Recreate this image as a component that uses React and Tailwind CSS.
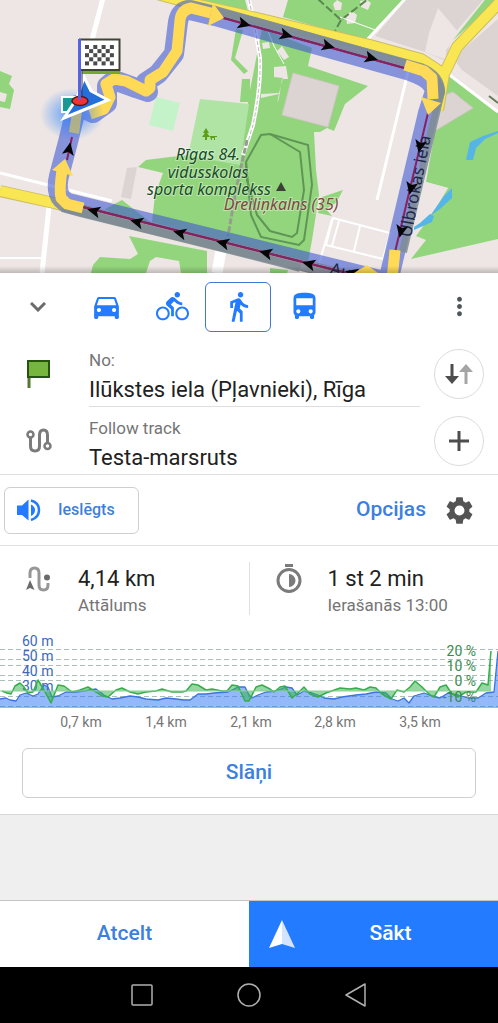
import React, { useState } from 'react';
import {
  MdDirectionsBike,
  MdDirectionsBus,
  MdDirectionsCar,
  MdDirectionsWalk,
  MdMoreVert,
  MdSettings,
} from 'react-icons/md';

const MODES = [
  { id: 'car', label: 'Auto', Icon: MdDirectionsCar },
  { id: 'bike', label: 'Velosipēds', Icon: MdDirectionsBike },
  { id: 'walk', label: 'Kājām', Icon: MdDirectionsWalk },
  { id: 'bus', label: 'Autobuss', Icon: MdDirectionsBus },
];

// x, y, rotation of the direction arrows along the route
const ROUTE_ARROWS = [
  [244, 24, 15], [286, 35, 15], [328, 46, 15], [371, 58, 15],
  [420, 146, 102], [411, 188, 102], [401, 231, 102],
  [352, 273, 194], [309, 264, 194], [266, 253, 194], [223, 243, 194],
  [180, 233, 194], [137, 222, 194], [94, 211, 194], [69, 149, 281],
];

const GRID_LINES = [24, 34, 40, 50, 55, 71, 81];

const ELEVATION =
  '0,74 6,73 10,75 16,76 20,70 26,68 33,71 38,69 44,60 48,62 52,72 58,71 62,69 66,67 76,67 84,66 96,64 104,70 112,74 120,73 130,71 138,72 146,74 158,75 166,73 176,74 184,75 190,75 198,69 206,69 214,68 228,67 238,62 245,62 249,70 252,73 258,70 266,67 276,66 286,62 292,63 297,70 304,66 312,68 318,70 324,73 334,74 342,72 356,70 366,69 376,67 386,68 392,74 398,76 404,73 409,78 414,71 424,68 432,71 440,73 448,68 458,70 468,73 478,73 486,68 494,67 498,26';

const SLOPE =
  '2,66 7,68 11,69 15,61 20,58 24,62 28,68 33,67 38,55 44,65 51,78 58,60 64,61 72,67 80,65 88,62 96,67 102,71 108,72 116,65 122,63 130,67 138,69 146,67 156,66 162,64 172,67 182,67 186,66 192,59 198,60 206,65 212,64 222,66 227,66 232,60 238,61 245,76 249,76 256,62 262,60 270,64 274,67 280,62 285,61 292,73 298,68 304,62 310,69 318,72 326,68 340,63 350,64 356,63 364,65 370,62 376,63 382,69 391,74 397,65 404,67 410,62 415,56 422,62 430,70 434,72 440,62 446,60 452,69 458,72 466,67 476,67 482,58 488,60 491,26';

const RouteMap = () => (
  <svg viewBox="0 0 498 273" className="block w-full h-auto bg-[#ede6e4]" role="img" aria-label="Karte">
    <defs>
      <radialGradient id="heading">
        <stop offset="0.3" stopColor="#237bff" stopOpacity="0.8" />
        <stop offset="1" stopColor="#237bff" stopOpacity="0" />
      </radialGradient>
      <linearGradient id="sheetShadow" x1="0" y1="0" x2="0" y2="1">
        <stop offset="0" stopColor="#000" stopOpacity="0" />
        <stop offset="1" stopColor="#000" stopOpacity="0.2" />
      </linearGradient>
    </defs>

    {/* Buildings and yards */}
    <g fill="#dcd4d2">
      <path d="M406 0H483L452 36L446 61L425 52L375 36Z" />
      <path d="M498 19L458 54L456 62L462 70L498 96Z" />
      <path d="M127 168L137 167L131 199L121 197Z" />
    </g>
    <path d="M438 8L459 33L446 50L447 60L425 52L429 33Z" fill="#ede6e4" />

    {/* Green areas */}
    <g fill="#93d57c">
      <path d="M190 0H245L248 11Z" />
      <path d="M288 0H406L367 41L283 17Z" />
      <path d="M453 40L498 0V-4L488 -4Z" />
      <path d="M262 29L312 48L308 66L368 86L345 104L334 131L327 128L320 132L314 132L316 170L319 195L312 240L308 262L152 222L155 195L163 173L138 167L146 160L170 157L189 155L240 160L249 95Z" />
      <path d="M105 209L122 200L150 222L145 230Z" />
      <path d="M129 236L207 251L207 273H91L93 265L100 257L130 259L138 254Z" />
      <path d="M236 29L243 30L235 58L248 71L244 74L231 60ZM242 79L250 79V102L240 102Z" />
      <path d="M322 197L343 190L336 203L326 209L332 216L318 213Z" />
      <path d="M270 268L288 270L287 273H270Z" />
      <path d="M448 73L498 112V239L411 259L426 240L416 236L433 213L448 188L426 182L436 125Z" />
      <path d="M0 71L12 76L9 84L14 90L10 109L0 107V101L5 102L7 94L0 92Z" />
    </g>
    <path d="M200 99L249 104L240 165L188 156Z" fill="#afe4a5" />
    <path d="M156 97L180 103L173 131L149 125Z" fill="#c4f3ca" />
    <path d="M150 261L156 257L179 261L181 273H146Z" fill="#ede6e4" />
    <path d="M426 182L448 188L430 216L416 228Z" fill="#ede6e4" />
    <g fill="#dcd4d2" stroke="#cfc6c4" strokeWidth="1">
      <path d="M293 73L339 86L328 127L282 115Z" />
      <path d="M453 92L473 108L433 132L442 96Z" />
    </g>
    <g fill="#ede6e4">
      <path d="M262 43L269 42L270 48L263 49ZM277 51L282 46L289 57L284 60ZM274 67L286 66L288 79L282 79L279 98L277 103L279 94L261 98V94L279 93L283 78L274 77Z" />
      <path d="M333 4L337 0L342 3L341 10L335 10ZM346 15L352 11L357 15L355 23L347 24ZM360 1L367 0L371 3L368 10L361 7Z" />
    </g>
    <g fill="none" stroke="#5b8a50" strokeWidth="2" strokeDasharray="8 3">
      <path d="M318 -1L341 20L372 -4M341 20L334 33" />
    </g>
    <g fill="#55b5e6">
      <path d="M466 160L470 142L483 136L498 131V133L485 139L476 148L473 160Z" />
      <path d="M452 188V198L440 209L430 216L444 196ZM430 214L434 216L432 222L414 230V227L420 223Z" />
    </g>

    {/* Stadium track */}
    <g fill="none" stroke="#5f9656" strokeWidth="2">
      <path d="M246 162L261 135L270 134L308 145L312 185L304 240L299 245L261 237L251 215Z" />
      <path d="M270 134L300 152L304 190L297 233L292 237L270 231L257 215L247 180L246 162" />
    </g>

    {/* Minor roads */}
    <g fill="none" stroke="#fff" strokeLinejoin="round">
      <path d="M103 -2L92 40" strokeWidth="5" />
      <path d="M0 173L112 201" strokeWidth="3" />
      <path d="M49 207L42 273" strokeWidth="5" />
      <path d="M0 258H42" strokeWidth="2" />
      <path d="M221 250L217 273" strokeWidth="11" />
      <path d="M249 0L254 22L260 58Q261 88 253 125L243 155" strokeWidth="4" />
      <path d="M405 -1L366 41M447 73L498 112" strokeWidth="3" />
      <path d="M408 72L377 200" strokeWidth="3" />
      <path d="M333 218L390 233L383 259L326 245ZM339 221L332 246M360 226L354 251M332 219L319 264" strokeWidth="2" />
      <path d="M267 29L274 46L284 64M340 17L378 31" strokeWidth="1" />
    </g>
    <path d="M249 0L254 22L260 58Q261 88 253 125L247 145" fill="none" stroke="#c8b0cb" strokeWidth="1" strokeDasharray="4 2" />
    <path d="M247 140L236 190L228 236" fill="none" stroke="#969c90" strokeWidth="3" strokeDasharray="6 2" />
    <path d="M489 96L498 103" stroke="#667a5c" strokeWidth="2" />

    {/* Main roads */}
    <g fill="none" strokeLinejoin="round">
      <path d="M0 191L54 203L130 223L395 288M150 -8L190 3L248 16L370 45L421 59L444 74L438 110M445 72L457 47L500 2" stroke="#cbbd61" strokeWidth="12" />
      <path d="M0 191L54 203L130 223L395 288M150 -8L190 3L248 16L370 45L421 59L444 74L438 110M445 72L457 47L500 2" stroke="#f8e653" strokeWidth="10" />
    </g>

    {/* Route */}
    <path
      d="M77 105L68 142L59 176Q54 197 68 203L388 282L428 113L435 91Q433 79 410 71L215 16L190 10Q180 10 178 22L174 54L158 74L146 82L148 92L136 88L114 80L107 86L107 103L93 113Z"
      fill="none" stroke="#3c55d2" strokeOpacity="0.58" strokeWidth="20" strokeLinejoin="round"
    />
    <path d="M72 137L67 160M83 207L395 285M395 252L428 113M220 17L408 69" fill="none" stroke="#85235f" strokeWidth="2" />
    <path d="M200 7L250 20L370 53L421 67Q441 75 441 92L436 113L403 252M62 208L80 213L250 255L300 268" fill="none" stroke="#7f8c94" strokeOpacity="0.85" strokeWidth="8" />
    <path d="M220 17L408 69M83 207L395 285" fill="none" stroke="#85235f" strokeWidth="2" />

    {/* Street names run under the direction arrows */}
    <g className="font-['Noto_Sans',sans-serif] text-[17px]" fill="#20264a">
      <text transform="translate(411 238) rotate(-79)">Ulbrokas iela</text>
      <text transform="translate(329 274) rotate(14)">Augusta</text>
    </g>
    {ROUTE_ARROWS.map(([x, y, angle]) => (
      <path key={`${x}-${y}`} d="M7 0L-6 -6L-3 0L-6 6Z" transform={`translate(${x} ${y}) rotate(${angle})`} fill="#050505" />
    ))}

    {/* Turn arrows */}
    <g fill="none" stroke="#ffda56" strokeWidth="11" strokeLinejoin="round">
      <path d="M90 114L104 109L110 97L106 84L114 79L126 81L146 91L150 88L150 80L163 72L177 51L180 20Q181 10 191 8L211 13" />
      <path d="M405 65L424 71L432 78L433 99" />
      <path d="M83 208L67 204L61 198Q59 190 62 170" />
      <path d="M395 250L392 280" />
    </g>
    <g fill="#ffda56">
      <path d="M213 3L224 18L208 26Z" />
      <path d="M421 97L441 103L428 115Z" />
      <path d="M52 170L65 159L73 176Z" />
      <path d="M354 273L367 265L378 273Z" />
    </g>

    {/* Place labels */}
    <g className="font-['Noto_Sans',sans-serif] italic text-[16px]" textAnchor="middle" stroke="#fff" strokeOpacity="0.4" strokeWidth="2" paintOrder="stroke">
      <text x="208" y="160" fill="#164c24">Rīgas 84.</text>
      <text x="208" y="178" fill="#164c24">vidusskolas</text>
      <text x="209" y="195" fill="#164c24">sporta komplekss</text>
      <text x="281" y="210" fill="#7b4a3d">Dreiliņkalns (35)</text>
    </g>
    <path d="M281 182L286 191H276Z" fill="#3c4037" />
    <g fill="#5c9f14">
      <path d="M206 128L209 133H207L210 137H207V140H205V137H202L205 133H203Z" />
      <path d="M210 136H217V137H215V140H214V138H212V140H211Z" />
    </g>

    {/* Current position */}
    <ellipse cx="72" cy="114" rx="32" ry="26" fill="url(#heading)" opacity="0.65" />
    <path d="M72 112H82L79 134L69 132Z" fill="#c4ba70" opacity="0.8" />
    <path d="M62 97H79V112H62Z" fill="#159c92" stroke="#fff" strokeWidth="2" />
    <path d="M84 77L91 91L108 100L64 118L77 98Z" fill="#2370dc" stroke="#fff" strokeWidth="3" />
    {/* Destination flag */}
    <path d="M82 71H120V74H82Z" fill="#78a72e" />
    <path d="M82 70V99" stroke="#3a3c35" strokeWidth="1" />
    <path d="M80 39.500H119.500V70H80Z" fill="#fff" stroke="#414337" strokeWidth="2" />
    {[0, 1, 2, 3, 4].map((row) =>
      [0, 1, 2, 3, 4, 5, 6].map(
        (col) =>
          (row + col) % 2 === 0 && (
            <rect key={`${row}-${col}`} x={85 + col * 4.15} y={45 + row * 4.1} width="4" height="4" fill="#4b4b4b" />
          )
      )
    )}
    <ellipse cx="80" cy="101" rx="8" ry="4.500" fill="#ee3338" stroke="#5b1720" strokeWidth="1.500" />
    <path d="M79.500 39V100" stroke="#5761e6" strokeWidth="3" />
    <rect y="266" width="498" height="7" fill="url(#sheetShadow)" />
  </svg>
);

const ElevationChart = () => (
  <svg viewBox="0 0 498 110" className="block w-full h-auto font-[Roboto,sans-serif] text-[14px]" role="img" aria-label="Augstums un slīpums">
    {GRID_LINES.map((y) => (
      <path key={y} d={`M0 ${y}.5H498`} stroke="#a9c0ba" strokeWidth="1" strokeDasharray="5 3" />
    ))}
    <g fill="#3b69b9">
      <text x="22" y="21">60 m</text>
      <text x="22" y="36">50 m</text>
      <text x="22" y="51">40 m</text>
      <text x="22" y="66">30 m</text>
    </g>
    <polygon points={`${ELEVATION} 498,83 0,83`} fill="#2874f5" fillOpacity="0.5" />
    <polyline points={ELEVATION} fill="none" stroke="#3b74dc" strokeWidth="1.300" strokeLinejoin="round" />
    <polygon points={`0,66 ${SLOPE} 491,66`} fill="#35b44b" fillOpacity="0.52" />
    <polyline points={SLOPE} fill="none" stroke="#35ad4b" strokeWidth="1.500" strokeLinejoin="round" />
    <path d="M0 66H491" stroke="#8bd095" strokeWidth="1" />
    <g fill="#3a8a4d" textAnchor="end">
      <text x="476" y="31">20 %</text>
      <text x="476" y="46">10 %</text>
      <text x="476" y="61">0 %</text>
      <text x="476" y="77">-10 %</text>
    </g>
    <g fill="#757575" textAnchor="middle">
      <text x="81" y="102">0,7 km</text>
      <text x="166" y="102">1,4 km</text>
      <text x="251" y="102">2,1 km</text>
      <text x="335" y="102">2,8 km</text>
      <text x="420" y="102">3,5 km</text>
    </g>
  </svg>
);

const RoundButton = ({ label, children }) => (
  <button aria-label={label} className="flex size-[50px] items-center justify-center rounded-full border border-[#dcdcdc]">
    {children}
  </button>
);

const App = () => {
  const [mode, setMode] = useState('walk');
  const [sound, setSound] = useState(true);

  return (
    <div className="flex min-h-screen flex-col bg-[#efefef] font-[Roboto,sans-serif] text-[#212121]">
      <RouteMap />

      <main className="border-b border-[#d8d8d8] bg-white">
        {/* Transport modes */}
        <div className="flex h-[67px] items-center pl-[7px]">
          <button aria-label="Sakļaut" className="flex h-[50px] w-[66px] items-center justify-center pr-1">
            <svg width="16" height="10" viewBox="0 0 16 10" fill="none" stroke="#6b6b6b" strokeWidth="3">
              <path d="M1 1L8 8L15 1" />
            </svg>
          </button>
          {MODES.map(({ id, label, Icon }) => (
            <button
              key={id}
              aria-label={label}
              aria-pressed={mode === id}
              onClick={() => setMode(id)}
              className={`flex h-[50px] w-[66px] items-center justify-center rounded-md border text-[#237bff] ${
                mode === id ? 'border-[#3d78d4]' : 'border-transparent'
              }`}
            >
              <Icon size={33} />
            </button>
          ))}
          <button aria-label="Vairāk" className="ml-auto flex h-[50px] w-[78px] items-center justify-center text-[#4f5659]">
            <MdMoreVert size={29} />
          </button>
        </div>

        {/* Destination and track */}
        <div className="flex h-[67px] items-center">
          <div className="flex w-[89px] shrink-0 pl-[27px]">
            <svg width="24" height="28" viewBox="0 0 24 28">
              <path d="M1 1H22V17H1Z" fill="#76b63f" stroke="#245410" strokeWidth="2" />
              <path d="M2 18V28" stroke="#52792f" strokeWidth="3" />
            </svg>
          </div>
          <div className="flex h-full min-w-0 flex-1 flex-col justify-end border-b border-[#dedede]">
            <p className="text-[17px] leading-7 text-[#757575]">No:</p>
            <p className="truncate text-[22px] leading-8">Ilūkstes iela (Pļavnieki), Rīga</p>
          </div>
          <div className="flex w-[78px] shrink-0 justify-center">
            <RoundButton label="Apmainīt">
              <svg width="28" height="20" viewBox="0 0 28 20" strokeWidth="3">
                <path d="M7 0V14" stroke="#4d4d4d" />
                <path d="M0 12H14L7 20Z" fill="#4d4d4d" />
                <path d="M21 6V20" stroke="#a5a5a5" />
                <path d="M14 8H28L21 0Z" fill="#a5a5a5" />
              </svg>
            </RoundButton>
          </div>
        </div>
        <div className="flex h-[68px] items-center border-b border-[#e0e0e0]">
          <div className="flex w-[89px] shrink-0 pl-[26px]">
            <svg width="26" height="25" viewBox="0 0 26 25" fill="none" stroke="#7b7b7b" strokeWidth="3">
              <circle cx="4.500" cy="6.500" r="3" strokeWidth="2.500" />
              <circle cx="21.500" cy="18" r="3" strokeWidth="2.500" />
              <path d="M4.500 10V18Q4.500 23 9 23Q13.500 23 13.500 18V7Q13.500 2 17.500 2Q21.500 2 21.500 7V14" />
            </svg>
          </div>
          <div className="min-w-0 flex-1 pt-1.5">
            <p className="text-[17px] leading-7 text-[#757575]">Follow track</p>
            <p className="truncate text-[22px] leading-8">Testa-marsruts</p>
          </div>
          <div className="flex w-[78px] shrink-0 justify-center">
            <RoundButton label="Pievienot">
              <svg width="20" height="20" viewBox="0 0 20 20" stroke="#4d4d4d" strokeWidth="3">
                <path d="M10 0V20M0 10H20" />
              </svg>
            </RoundButton>
          </div>
        </div>

        {/* Sound and options */}
        <div className="flex h-[71px] items-center justify-between border-b border-[#e0e0e0] pl-1">
          <button
            aria-pressed={sound}
            onClick={() => setSound(!sound)}
            className="flex h-[47px] w-[135px] items-center gap-[17px] rounded-md border border-[#cfcfcf] pl-3 text-base font-medium text-[#3c7fdf]"
          >
            <svg width="24" height="23" viewBox="0 0 24 23" fill="#237bff">
              <path d="M0 6.500H5L11.500 0.500V21.500L5 16H0Z" />
              <path d="M14 5.500Q18 7.500 18 11Q18 15 14 17Z" />
              <path d="M14 1.500Q22 3.500 22 11Q22 18.500 14 21" fill="none" stroke="#237bff" strokeWidth="2.500" />
            </svg>
            Ieslēgts
          </button>
          <button className="flex items-center text-[21px] font-medium text-[#3c7fdf]">
            Opcijas
            <span className="flex w-[72px] justify-center pr-[6px] text-[#545454]">
              <MdSettings size={33} />
            </span>
          </button>
        </div>

        {/* Distance and time */}
        <div className="flex items-center pt-4 pb-[10px]">
          <div className="flex h-[53px] flex-1 items-center border-r border-[#e0e0e0]">
            <div className="flex w-[78px] shrink-0 self-start pl-[26px] pt-1">
              <svg width="25" height="26" viewBox="0 0 25 26" fill="none">
                <path d="M0 24L4 14L8.500 24L4 22Z" fill="#6b6b6b" />
                <path d="M4 12V7Q4 2 8.500 2Q13 2 13 7V19Q13 24 17.500 24Q22 24 22 19V17" stroke="#979797" strokeWidth="3" />
                <circle cx="21" cy="11.500" r="3" fill="#6b6b6b" />
              </svg>
            </div>
            <div>
              <p className="text-[22px] leading-8">4,14 km</p>
              <p className="text-[17px] leading-5 text-[#757575]">Attālums</p>
            </div>
          </div>
          <div className="flex h-[53px] flex-1 items-center">
            <div className="flex w-[78px] shrink-0 self-start pl-[26px] pt-[2px]">
              <svg width="26" height="29" viewBox="0 0 26 29" fill="none">
                <path d="M9 1.500H17" stroke="#7b7b7b" strokeWidth="3" />
                <circle cx="13" cy="16.500" r="11" stroke="#7b7b7b" strokeWidth="3" />
                <path d="M13 10A6.500 6.500 0 0 1 13 23Z" fill="#7b7b7b" />
              </svg>
            </div>
            <div>
              <p className="text-[22px] leading-8">1 st 2 min</p>
              <p className="text-[17px] leading-5 text-[#757575]">Ierašanās 13:00</p>
            </div>
          </div>
        </div>

        <ElevationChart />

        <div className="px-[22px] pt-[13px] pb-4">
          <button className="h-[50px] w-full rounded-md border border-[#cfcfcf] text-[21px] font-medium text-[#3c7fdf]">Slāņi</button>
        </div>
      </main>

      <footer className="mt-auto">
        <div className="flex h-[67px] border-t border-[#c4c4c4] text-[21px] font-medium">
          <button className="w-1/2 bg-white text-[#3c7fdf]">Atcelt</button>
          <button className="flex w-1/2 items-center bg-[#237bff] pl-5 text-white">
            <svg width="26" height="28" viewBox="0 0 26 28">
              <path d="M13 0L0 28L13 24Z" fill="#fff" />
              <path d="M13 0L26 28L13 24Z" fill="#d3e4ff" />
            </svg>
            <span className="flex-1 pr-3 text-center">Sākt</span>
          </button>
        </div>
        <nav className="flex h-14 items-center justify-center gap-[84px] bg-black">
          <button aria-label="Pārskats">
            <svg width="22" height="22" viewBox="0 0 22 22" fill="none" stroke="#b0b0b0" strokeWidth="1.500">
              <rect x="1" y="1" width="20" height="20" rx="1" />
            </svg>
          </button>
          <button aria-label="Sākums">
            <svg width="24" height="24" viewBox="0 0 24 24" fill="none" stroke="#b0b0b0" strokeWidth="1.500">
              <circle cx="12" cy="12" r="11" />
            </svg>
          </button>
          <button aria-label="Atpakaļ">
            <svg width="22" height="24" viewBox="0 0 22 24" fill="none" stroke="#b0b0b0" strokeWidth="1.500" strokeLinejoin="round">
              <path d="M20 1V23L1 12Z" />
            </svg>
          </button>
        </nav>
      </footer>
    </div>
  );
};

export default App;
